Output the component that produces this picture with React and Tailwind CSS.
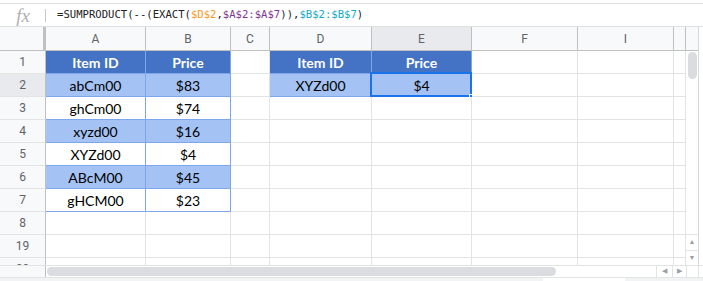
import React from 'react';

const cols = [
  { key: 'A', w: 'w-[100px]' },
  { key: 'B', w: 'w-[85px]' },
  { key: 'C', w: 'w-[39px]' },
  { key: 'D', w: 'w-[102px]' },
  { key: 'E', w: 'w-[100px]' },
  { key: 'F', w: 'w-[106px]' },
  { key: 'I', w: 'w-[96px]' },
  { key: '', w: 'w-[12px]' },
];

const HEAD = 'bg-[#4472c4] text-white font-bold';
const LIGHT = 'bg-[#a4c2f4] text-black';
const PLAIN = 'bg-white text-black';

// cells keyed by row number -> column -> { text, style }
const data = {
  1: { A: ['Item ID', HEAD], B: ['Price', HEAD], D: ['Item ID', HEAD], E: ['Price', HEAD] },
  2: { A: ['abCm00', LIGHT], B: ['$83', LIGHT], D: ['XYZd00', LIGHT], E: ['$4', LIGHT] },
  3: { A: ['ghCm00', PLAIN], B: ['$74', PLAIN] },
  4: { A: ['xyzd00', LIGHT], B: ['$16', LIGHT] },
  5: { A: ['XYZd00', PLAIN], B: ['$4', PLAIN] },
  6: { A: ['ABcM00', LIGHT], B: ['$45', LIGHT] },
  7: { A: ['gHCM00', PLAIN], B: ['$23', PLAIN] },
};

const rows = [1, 2, 3, 4, 5, 6, 7, 8, 19];

function Row({ n }) {
  const r = data[n] || {};
  return (
    <div className="flex h-[23px]">
      <div
        className={`w-[46px] shrink-0 border-r border-b border-r-[#c0c0c0] border-b-[#e2e3e3] flex items-center justify-center text-[12px] text-[#5f6368] ${
          n === 2 ? 'bg-[#e8eaed]' : 'bg-[#f8f9fa]'
        }`}
      >
        {n}
      </div>
      {cols.map((c) => {
        const cell = r[c.key];
        const inTable = cell || ((c.key === 'A' || c.key === 'B') && n <= 7) || ((c.key === 'D' || c.key === 'E') && n <= 2);
        return (
          <div
            key={c.key || 'x'}
            className={`${c.w} shrink-0 relative border-r border-b flex items-center justify-center text-[14px] ${
              inTable ? 'border-[#7ea6eb]' : 'border-[#e2e3e3]'
            } ${cell ? cell[1] : 'bg-white'}`}
            style={{ fontFamily: 'Lato, "Open Sans", sans-serif' }}
          >
            {cell ? cell[0] : ''}
            {n === 2 && c.key === 'E' && (
              <>
                <div className="absolute -left-[2px] -top-[2px] right-[-1px] bottom-[-1px] border-2 border-[#1a73e8]" />
                <div className="absolute right-[-4px] bottom-[-4px] w-[6px] h-[6px] bg-[#1a73e8] border border-white" />
              </>
            )}
          </div>
        );
      })}
    </div>
  );
}

export default function App() {
  const mono = { fontFamily: '"DejaVu Sans Mono", "Liberation Mono", monospace' };
  return (
    <div className="w-[703px] h-[281px] bg-white overflow-hidden" style={{ fontFamily: 'Roboto, Arial, sans-serif' }}>
      {/* formula bar */}
      <div className="pt-[3px]">
        <div className="h-[24px] border-t border-b border-[#e0e0e0] flex items-center">
          <div className="w-[45px] flex justify-center">
            <span className="italic text-[19px] text-[#b0b0b0] leading-none pl-[1px]" style={{ fontFamily: '"Liberation Serif", serif' }}>
              fx
            </span>
          </div>
          <div className="w-px h-[13px] bg-[#c8c8c8]" />
          <div className="pl-[11px] text-[10.6px] text-[#222] whitespace-nowrap" style={mono}>
            =SUMPRODUCT(--(EXACT(<span className="text-[#f7981d]">$D$2</span>,
            <span className="text-[#7e3794]">$A$2:$A$7</span>)),<span className="text-[#11a9cc]">$B$2:$B$7</span>)
          </div>
        </div>
      </div>

      <div className="flex">
        <div className="w-[686px] shrink-0">
          {/* column headers */}
          <div className="flex h-[24px] bg-[#f8f9fa]">
            <div className="w-[46px] shrink-0 border-r-[3px] border-b border-r-[#c0c0c0] border-b-[#c0c0c0] bg-[#f8f9fa] w-[46px]" />
            {cols.map((c) => (
              <div
                key={c.key || 'x'}
                className={`${c.w} shrink-0 border-r border-b border-r-[#c0c0c0] border-b-[#c0c0c0] flex items-center justify-center text-[12px] text-[#5f6368] ${
                  c.key === 'E' ? 'bg-[#e8eaed]' : ''
                }`}
              >
                {c.key}
              </div>
            ))}
          </div>
          {rows.map((n) => (
            <Row key={n} n={n} />
          ))}
          {/* partially visible row 20 */}
          <div className="flex h-[7px] overflow-hidden">
            <div className="w-[46px] shrink-0 border-r border-[#c0c0c0] bg-[#f8f9fa] text-[12px] text-[#5f6368] text-center leading-[23px] h-[23px]">
              20
            </div>
            {cols.map((c) => (
              <div key={c.key || 'x'} className={`${c.w} shrink-0 border-r border-[#e2e3e3] h-[23px]`} />
            ))}
          </div>
        </div>

        {/* vertical scrollbar */}
        <div className="w-[13px] shrink-0 border-r border-[#d8d8d8] flex flex-col">
          <div className="h-[24px] bg-[#f8f9fa] border-b border-[#c0c0c0]" />
          <div className="flex-1 flex flex-col items-center pt-[1px]">
            <div className="w-[9px] h-[27px] rounded-full bg-[#dadce0]" />
            <div className="flex-1" />
            <div className="w-full h-[16px] border-t border-[#e2e3e3] flex items-center justify-center text-[7px] text-[#9aa0a6]">▲</div>
            <div className="w-full h-[15px] border-t border-[#e2e3e3] flex items-center justify-center text-[7px] text-[#9aa0a6]">▼</div>
          </div>
        </div>
        <div className="w-[4px]" />
      </div>

      {/* horizontal scrollbar */}
      <div className="flex h-[12px] border-t border-[#e2e3e3]">
        <div className="w-[46px] shrink-0 bg-[#f8f9fa] border-r border-[#c0c0c0]" />
        <div className="w-[610px] shrink-0 flex items-center pl-[1px]">
          <div className="w-[509px] h-[9px] rounded-full bg-[#dadce0]" />
        </div>
        <div className="w-[16px] border-l border-[#e2e3e3] flex items-center justify-center text-[7px] text-[#9aa0a6]">◀</div>
        <div className="w-[14px] border-l border-[#e2e3e3] flex items-center justify-center text-[7px] text-[#9aa0a6]">▶</div>
        <div className="w-[13px] border-l border-r border-[#e2e3e3]" />
      </div>
      <div className="flex h-[4px] border-t border-[#e2e3e3]">
        <div className="w-[543px] bg-[#f1f3f4]" />
        <div className="w-[82px] bg-white" />
        <div className="flex-1 bg-[#f1f3f4]" />
      </div>
    </div>
  );
}
